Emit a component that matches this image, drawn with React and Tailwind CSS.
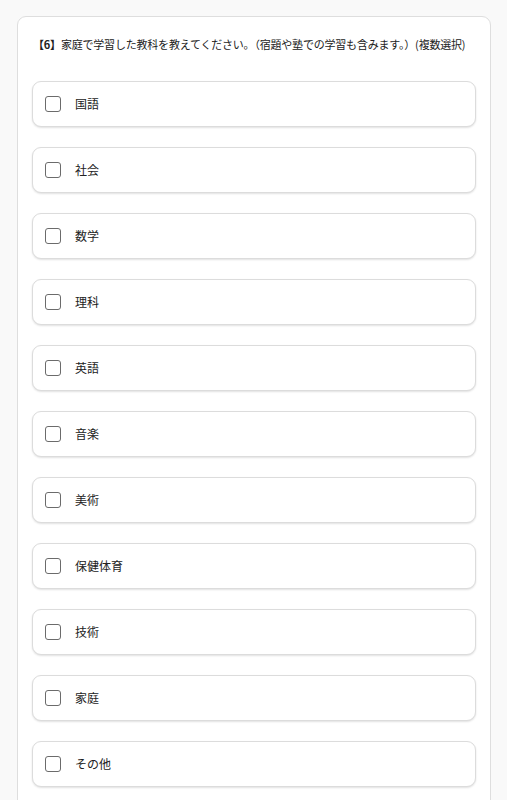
import React from 'react';

export default function App() {
  const subjects = ['国語', '社会', '数学', '理科', '英語', '音楽', '美術', '保健体育', '技術', '家庭', 'その他'];

  return (
    <div
      className="min-h-screen bg-[#f9f9f9] pt-[16px] pl-[17px] pr-[16px] pb-10"
      style={{ fontFamily: '"Noto Sans CJK JP", "Noto Sans", sans-serif' }}
    >
      <div className="bg-white border border-[#dedede] rounded-[9px] px-[14px] pt-[19px] pb-6">
        <p className="text-[11px] leading-[16px] text-[#222] pl-[1px] whitespace-nowrap tracking-[-0.2px]">
          <span className="font-bold">【6】</span>家庭で学習した教科を教えてください。（宿題や塾での学習も含みます。）(複数選択)
        </p>
        <div className="mt-[29px] flex flex-col gap-[20px]">
          {subjects.map((s) => (
            <label
              key={s}
              className="h-[46px] flex items-center bg-white border border-[#dcdcdc] rounded-[9px] shadow-[0_1px_2px_rgba(0,0,0,0.12)] pl-[12px]"
            >
              <span className="w-[16px] h-[16px] border-[1.5px] border-[#6b6b6b] rounded-[3px] bg-white shrink-0" />
              <span className="ml-[14px] text-[12px] text-[#222]">{s}</span>
            </label>
          ))}
        </div>
      </div>
    </div>
  );
}
